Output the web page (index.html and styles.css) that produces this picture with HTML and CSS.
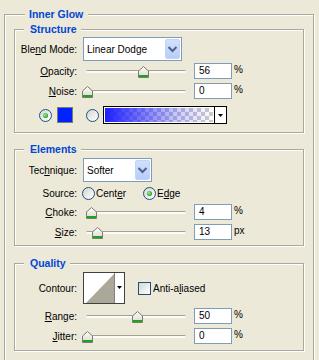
FILE: index.html
```html
<!DOCTYPE html>
<html lang="en">
<head>
    <meta charset="UTF-8">
    <title>Inner Glow</title>
    <link rel="stylesheet" href="styles.css">
</head>
<body>
    <svg class="sprites" width="0" height="0">
        <defs>
            <linearGradient id="thumbFill" x1="0" y1="0" x2="0" y2="1">
                <stop offset="0" stop-color="#ffffff"/>
                <stop offset="1" stop-color="#d8d8cc"/>
            </linearGradient>
            <symbol id="thumb" viewBox="0 0 11 12">
                <path d="M0.5 11.5V5L5.5 0.5L10.5 5V11.5Z" fill="url(#thumbFill)" stroke="#7b7b70"/>
                <rect x="1" y="9" width="9" height="2" fill="#21a121"/>
            </symbol>
            <symbol id="chevron" viewBox="0 0 15 22">
                <path d="M3.5 9L7.5 13L11.5 9" fill="none" stroke="#4d6185" stroke-width="2"/>
            </symbol>
        </defs>
    </svg>

    <fieldset class="group outer">
        <legend>Inner Glow</legend>

        <fieldset class="group">
            <legend>Structure</legend>
            <div class="group-body structure">
                <div class="row row-select">
                    <span class="lbl">Ble<u>n</u>d Mode:</span>
                    <div class="select blend">
                        <span class="select-text">Linear Dodge</span>
                        <span class="select-btn"><svg width="15" height="22"><use href="#chevron"/></svg></span>
                    </div>
                </div>
                <div class="row row-field gap2">
                    <span class="lbl"><u>O</u>pacity:</span>
                    <div class="slider">
                        <div class="track"></div>
                        <svg class="thumb" width="11" height="12" style="left:52px"><use href="#thumb"/></svg>
                    </div>
                    <div class="num">56</div>
                    <span class="unit">%</span>
                </div>
                <div class="row row-field">
                    <span class="lbl"><u>N</u>oise:</span>
                    <div class="slider">
                        <div class="track"></div>
                        <svg class="thumb" width="11" height="12" style="left:-4px"><use href="#thumb"/></svg>
                    </div>
                    <div class="num">0</div>
                    <span class="unit">%</span>
                </div>
                <div class="row row-color">
                    <span class="radio on"></span>
                    <span class="swatch"></span>
                    <span class="radio"></span>
                    <div class="gradient-pick">
                        <span class="gradient"></span>
                        <span class="pick-btn"><svg width="5" height="3"><path d="M0 0H5L2.5 3Z" fill="#000"/></svg></span>
                    </div>
                </div>
            </div>
        </fieldset>

        <fieldset class="group elements">
            <legend>Elements</legend>
            <div class="group-body elements-body">
                <div class="row row-select">
                    <span class="lbl">Tec<u>h</u>nique:</span>
                    <div class="select technique">
                        <span class="select-text">Softer</span>
                        <span class="select-btn"><svg width="15" height="22"><use href="#chevron"/></svg></span>
                    </div>
                </div>
                <div class="row row-source">
                    <span class="lbl">Source:</span>
                    <span class="radio"></span>
                    <span class="radio-text">Cent<u>e</u>r</span>
                    <span class="radio on edge"></span>
                    <span class="radio-text">E<u>d</u>ge</span>
                </div>
                <div class="row row-field">
                    <span class="lbl"><u>C</u>hoke:</span>
                    <div class="slider">
                        <div class="track"></div>
                        <svg class="thumb" width="11" height="12" style="left:0px"><use href="#thumb"/></svg>
                    </div>
                    <div class="num">4</div>
                    <span class="unit">%</span>
                </div>
                <div class="row row-field">
                    <span class="lbl"><u>S</u>ize:</span>
                    <div class="slider">
                        <div class="track"></div>
                        <svg class="thumb" width="11" height="12" style="left:6px"><use href="#thumb"/></svg>
                    </div>
                    <div class="num">13</div>
                    <span class="unit">px</span>
                </div>
            </div>
        </fieldset>

        <fieldset class="group quality">
            <legend>Quality</legend>
            <div class="group-body quality-body">
                <div class="row row-contour">
                    <span class="lbl">Contour:</span>
                    <div class="contour">
                        <svg class="curve" width="30" height="30" viewBox="0 0 30 30">
                            <polygon points="2,30 30,1 30,30" fill="#aca899"/>
                        </svg>
                        <span class="pick-btn"><svg width="5" height="3"><path d="M0 0H5L2.5 3Z" fill="#000"/></svg></span>
                    </div>
                    <span class="checkbox"></span>
                    <span class="check-text">Anti-a<u>l</u>iased</span>
                </div>
                <div class="row row-field">
                    <span class="lbl"><u>R</u>ange:</span>
                    <div class="slider">
                        <div class="track"></div>
                        <svg class="thumb" width="11" height="12" style="left:46px"><use href="#thumb"/></svg>
                    </div>
                    <div class="num">50</div>
                    <span class="unit">%</span>
                </div>
                <div class="row row-field">
                    <span class="lbl"><u>J</u>itter:</span>
                    <div class="slider">
                        <div class="track"></div>
                        <svg class="thumb" width="11" height="12" style="left:-4px"><use href="#thumb"/></svg>
                    </div>
                    <div class="num">0</div>
                    <span class="unit">%</span>
                </div>
            </div>
        </fieldset>
    </fieldset>
</body>
</html>
```

FILE: styles.css
```css
* {
    box-sizing: border-box;
}

body {
    margin: 0;
    padding: 8px 5px 0 4px;
    background: #ece9d8;
    font-family: "Liberation Sans", Arial, sans-serif;
    font-size: 10px;
    color: #000;
    overflow: hidden;
}

.sprites {
    position: absolute;
    width: 0;
    height: 0;
}

/* group boxes */
.group {
    margin: 0;
    padding: 0;
    min-width: 0;
    border: 1px solid #aca899;
    box-shadow: inset 1px 1px 0 #fff, 1px 1px 0 #fff;
}

.group legend {
    margin-left: 9px;
    padding: 0 4px 0 6px;
    height: 13px;
    line-height: 13px;
    font-size: 10.5px;
    font-weight: bold;
    color: #0046d5;
    background: #ece9d8;
}

.outer {
    padding: 2px 9px 40px;
}

.outer > legend {
    margin-left: 11px;
    padding: 0 5px 0 4px;
}

.elements {
    margin-top: 10px;
}

.quality {
    margin-top: 11px;
}

.structure {
    padding: 1px 0 8px;
}

.elements-body {
    padding: 2px 0 5px;
}

.quality-body {
    padding: 2px 0 6px;
}

/* rows */
.row {
    display: flex;
    align-items: center;
    margin-top: 4px;
}

.row:first-child {
    margin-top: 0;
}

.row.gap2 {
    margin-top: 2px;
}

.row-select {
    height: 24px;
}

.row-field {
    height: 16px;
}

.row-source {
    height: 14px;
}

.row-contour {
    height: 32px;
}

.row-color {
    height: 18px;
    margin-top: 7px;
    padding-left: 24px;
}

.lbl {
    flex: none;
    width: 62px;
    margin-right: 6px;
    text-align: right;
    white-space: nowrap;
}

/* dropdowns */
.select {
    display: flex;
    align-items: center;
    height: 24px;
    border: 1px solid #7f9db9;
    background: #fff;
    padding: 0 1px 0 3px;
}

.select.blend {
    width: 99px;
}

.select.technique {
    width: 69px;
}

.select-text {
    flex: 1;
    white-space: nowrap;
}

.select-btn {
    display: flex;
    width: 15px;
    height: 20px;
    margin-left: auto;
    border-radius: 2px;
    background: linear-gradient(#d2e0fc, #b7cdfa);
    border: 1px solid #c3d3fd;
    align-items: center;
    justify-content: center;
    overflow: hidden;
}

.select-btn svg {
    flex: none;
}

/* sliders */
.slider {
    position: relative;
    flex: none;
    width: 100px;
    height: 16px;
    margin-left: 3px;
}

.track {
    margin-top: 7px;
    height: 3px;
    border-radius: 2px;
    border-top: 1px solid #a3a195;
    background: #fbfbf8;
}

.thumb {
    position: absolute;
    top: 3px;
}

.num {
    flex: none;
    width: 38px;
    height: 16px;
    margin-left: 8px;
    padding-left: 4px;
    border: 1px solid #7f9db9;
    background: #fff;
    line-height: 14px;
}

.unit {
    margin-left: 2px;
    margin-top: -3px;
}

/* radios and checkbox */
.radio {
    flex: none;
    display: inline-flex;
    align-items: center;
    justify-content: center;
    width: 13px;
    height: 13px;
    border: 1px solid #1c5180;
    border-radius: 50%;
    background: linear-gradient(135deg, #d6d6ce, #ffffff);
}

.radio.on::after {
    content: "";
    width: 5px;
    height: 5px;
    border-radius: 50%;
    background: radial-gradient(circle at 40% 40%, #a6eca6, #21a121 70%);
}

.radio-text {
    margin-left: 1px;
}

.row-source .lbl {
    margin-right: 5px;
}

.radio.edge {
    margin-left: 17px;
}

.checkbox {
    flex: none;
    width: 13px;
    height: 13px;
    margin-left: 13px;
    border: 1px solid #1c5180;
    background: linear-gradient(135deg, #d6d6ce, #ffffff);
}

.check-text {
    margin-left: 2px;
}

/* colour and gradient */
.swatch {
    flex: none;
    width: 16px;
    height: 16px;
    margin-left: 5px;
    border: 1px solid #7a7a7a;
    background: #0022ff;
}

.row-color .radio + .radio,
.swatch + .radio {
    margin-left: 13px;
}

.gradient-pick {
    display: flex;
    width: 124px;
    height: 18px;
    margin-left: 4px;
    border: 1px solid #000;
    background: #fff;
}

.gradient {
    flex: 1;
    margin: 1px;
    background:
        linear-gradient(to right, #1f1fff, rgba(31, 31, 255, 0.25) 65%, rgba(31, 31, 255, 0)),
        repeating-conic-gradient(#cccccc 0 25%, #ffffff 0 50%) 0 0 / 8px 8px;
}

.pick-btn {
    display: flex;
    width: 12px;
    align-items: center;
    justify-content: center;
    border-left: 1px solid #000;
    background: #fff;
}

/* contour */
.contour {
    display: flex;
    flex: none;
    width: 42px;
    height: 32px;
    border: 1px solid #404040;
    background: #fff;
}

.curve {
    flex: none;
}

.contour .pick-btn {
    width: 10px;
    align-items: flex-start;
    padding-top: 13px;
    border-left: 1px solid #808080;
}
```
